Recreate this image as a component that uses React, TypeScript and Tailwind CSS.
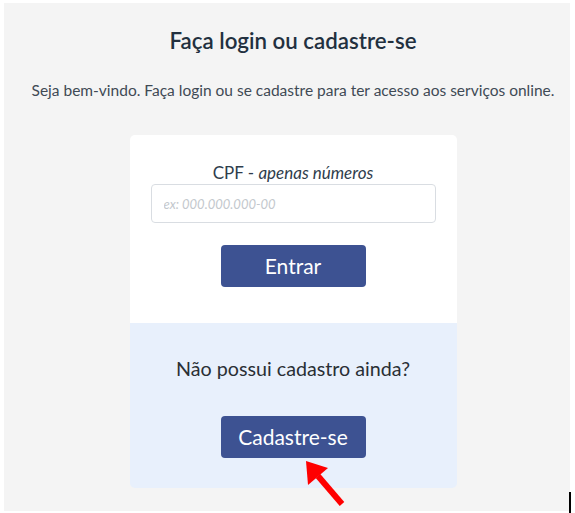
import React from "react";

export default function App() {
  return (
    <div className="w-[575px] h-[513px] bg-white relative" style={{ fontFamily: "Lato, 'Open Sans', sans-serif" }}>
      <div className="absolute left-[4px] top-[3px] w-[566px] h-[508px] bg-[#f4f4f4] flex flex-col items-center pl-[12px]">
        <h1 className="mt-[24px] text-[22.3px] leading-[28px] text-[#22303f] font-semibold">Faça login ou cadastre-se</h1>
        <p className="mt-[25px] text-[15.5px] leading-[20px] text-[#3f4a55] whitespace-nowrap">Seja bem-vindo. Faça login ou se cadastre para ter acesso aos serviços online.</p>
        <div className="mt-[35px] w-[327px] rounded-[5px] overflow-hidden flex flex-col">
          <div className="bg-white h-[188px] flex flex-col items-center pt-[27px]">
            <label className="text-[17px] leading-[21px] text-[#2f3d4c]">
              CPF - <span className="italic">apenas números</span>
            </label>
            <input
              className="mt-[1px] w-[285px] h-[39px] border border-[#d9dde2] rounded-[4px] px-[12px] text-[13px] italic placeholder:text-[#c3c8cd] outline-none"
              placeholder="ex: 000.000.000-00"
              style={{ fontFamily: "Lato, sans-serif" }}
            />
            <button className="mt-[22px] w-[145px] h-[42px] bg-[#3d5292] rounded-[4px] text-white text-[21px]">Entrar</button>
          </div>
          <div className="bg-[#e8f0fc] h-[165px] flex flex-col items-center pt-[33px]">
            <p className="text-[19.7px] leading-[26px] text-[#2a2f35]">Não possui cadastro ainda?</p>
            <button className="mt-[34px] w-[145px] h-[42px] bg-[#3d5292] rounded-[4px] text-white text-[21px]">Cadastre-se</button>
          </div>
        </div>
      </div>
      <svg className="absolute left-0 top-0" width="575" height="513" viewBox="0 0 575 513">
        <line x1="342" y1="504" x2="318" y2="476" stroke="#f00" strokeWidth="6" />
        <polygon points="306,461 328,468 308,485" fill="#f00" />
      </svg>
      <div className="absolute left-[569px] top-[492px] w-[2px] h-[21px] bg-black" />
    </div>
  );
}
